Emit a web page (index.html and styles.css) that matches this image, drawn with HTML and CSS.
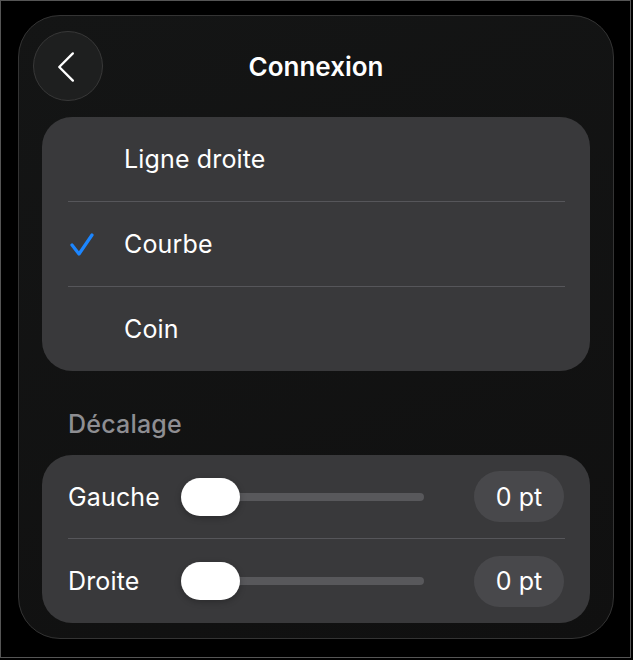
FILE: index.html
```html
<!DOCTYPE html>
<html lang="fr">
<head>
  <meta charset="UTF-8" />
  <meta name="viewport" content="width=device-width, initial-scale=1.0" />
  <title>Connexion</title>
  <link rel="stylesheet" href="styles.css">
</head>
<body>
  <div class="frame">
    <div class="panel">
      <div class="panel-header">
        <button class="back-btn" aria-label="Retour">
          <svg width="70" height="70" viewBox="0 0 70 70">
            <path d="M40 22 L26 36 L40 50" fill="none" stroke="#fff" stroke-width="2.4" stroke-linecap="round" stroke-linejoin="round"/>
          </svg>
        </button>
        <h1 class="panel-title">Connexion</h1>
        <div></div>
      </div>

      <!-- Connection type -->
      <div class="card">
        <div class="option-row">
          <span class="check"></span>
          <span class="option-label">Ligne droite</span>
        </div>
        <div class="sep"></div>
        <div class="option-row">
          <span class="check">
            <svg width="26" height="26" viewBox="0 0 26 26">
              <path d="M3 14 L10 23 L23 4" fill="none" stroke="#1c86ff" stroke-width="3.2" stroke-linecap="round" stroke-linejoin="round"/>
            </svg>
          </span>
          <span class="option-label">Courbe</span>
        </div>
        <div class="sep"></div>
        <div class="option-row">
          <span class="check"></span>
          <span class="option-label">Coin</span>
        </div>
      </div>

      <div class="section-label">Décalage</div>

      <!-- Offset sliders -->
      <div class="card">
        <div class="slider-row">
          <span class="slider-label">Gauche</span>
          <div class="slider">
            <div class="track"></div>
            <div class="thumb"></div>
          </div>
          <span class="value-pill">0 pt</span>
        </div>
        <div class="sep"></div>
        <div class="slider-row">
          <span class="slider-label">Droite</span>
          <div class="slider">
            <div class="track"></div>
            <div class="thumb"></div>
          </div>
          <span class="value-pill">0 pt</span>
        </div>
      </div>
    </div>
  </div>
</body>
</html>
```

FILE: styles.css
```css
* { margin: 0; padding: 0; box-sizing: border-box; font-family: Inter, "Liberation Sans", sans-serif; }
body { background-color: #000; }
.frame {
  width: 631px;
  height: 658px;
  border: 1px solid #555;
  padding: 14px 0 0 17px;
}
.panel {
  width: 596px;
  height: 624px;
  background: linear-gradient(160deg, #141515, #101010);
  border: 1px solid #343434;
  border-radius: 42px;
  padding: 15px 23px 0 23px;
}
.panel-header {
  display: grid;
  grid-template-columns: 70px 1fr 70px;
  align-items: center;
  margin-left: -9px;
  margin-right: -9px;
  margin-bottom: 16px;
}
.back-btn {
  width: 70px;
  height: 70px;
  border-radius: 50%;
  background-color: #1e1f1f;
  border: 1px solid #383838;
  display: flex;
  align-items: center;
  justify-content: center;
}
.back-btn svg { display: block; }
.panel-title {
  text-align: center;
  color: #fff;
  font-size: 26px;
  font-weight: 600;
}
.card {
  background-color: #39393b;
  border-radius: 30px;
}
.sep {
  height: 1px;
  background-color: #56565a;
  margin: 0 25px 0 26px;
}
.option-row {
  height: 84px;
  display: flex;
  align-items: center;
}
.check {
  width: 82px;
  padding-left: 27px;
  display: flex;
  align-items: center;
}
.option-label { color: #fff; font-size: 25px; letter-spacing: 0.15px; }
.section-label {
  color: #8e8e92;
  font-size: 25px;
  font-weight: 500;
  letter-spacing: 0.2px;
  padding-left: 26px;
  padding-top: 22px;
  height: 84px;
  display: flex;
  align-items: center;
}
.slider-row {
  height: 83px;
  display: grid;
  grid-template-columns: 113px 243px 1fr 90px;
  align-items: center;
  padding: 0 26px;
}
.slider-row:last-child { height: 84px; }
.slider-label { color: #fff; font-size: 25px; letter-spacing: 0.15px; }
.slider {
  position: relative;
  height: 38px;
  display: flex;
  align-items: center;
}
.track {
  width: 100%;
  height: 8px;
  border-radius: 4px;
  background-color: #58585b;
}
.thumb {
  position: absolute;
  left: 0;
  top: 0;
  width: 59px;
  height: 38px;
  border-radius: 19px;
  background-color: #fff;
  box-shadow: 0 2px 6px rgba(0,0,0,0.25);
}
.value-pill {
  grid-column: 4;
  height: 51px;
  border-radius: 26px;
  background-color: #48484b;
  color: #fff;
  font-size: 25px;
  display: flex;
  align-items: center;
  justify-content: center;
}
```
